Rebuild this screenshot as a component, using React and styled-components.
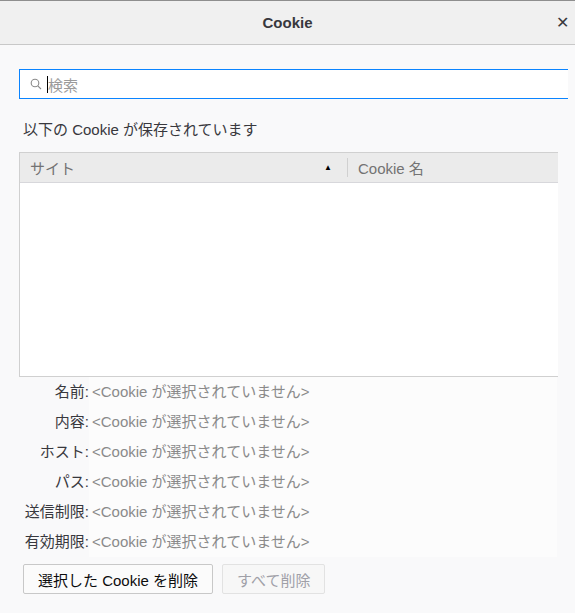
import React from 'react';
import styled, { createGlobalStyle } from 'styled-components';

const Global = createGlobalStyle`
  body { margin: 0; background: #f9f9fa; font-family: "Liberation Sans", "Noto Sans CJK JP", sans-serif; }
`;

const Window = styled.div`
  width: 575px;
  height: 613px;
  overflow: hidden;
  background: #f9f9fa;
  border-top: 1px solid #8e8e8e;
  box-sizing: border-box;
`;

const Header = styled.div`
  height: 43px;
  background: #f0f0f0;
  border-bottom: 1px solid #c8c8c8;
  display: flex;
  align-items: center;
  justify-content: center;
  position: relative;
  font-size: 15px;
  font-weight: bold;
  color: #38383d;
`;

const Close = styled.span`
  position: absolute;
  right: 6px;
  top: 12px;
  font-size: 16px;
  font-weight: normal;
  color: #38383d;
`;

const Body = styled.div`
  padding: 24px 0 0 19px;
  display: flex;
  flex-direction: column;
`;

const Search = styled.div`
  width: 538px;
  height: 28px;
  border: 1px solid #0a84ff;
  border-right: none;
  background: #fff;
  display: flex;
  align-items: center;
  gap: 5px;
  padding-left: 10px;
  box-sizing: content-box;
  font-size: 15px;
  color: #9a9a9a;
`;

const Caret = styled.span`
  width: 1px;
  height: 17px;
  background: #000;
  margin-right: -5px;
`;

const Caption = styled.div`
  margin: 19px 0 13px 4px;
  font-size: 15px;
  color: #38383d;
`;

const Table = styled.div`
  width: 538px;
  height: 223px;
  border: 1px solid #d0d0d0;
  border-right: none;
  background: #fff;
`;

const Head = styled.div`
  height: 29px;
  background: #ebebeb;
  border-bottom: 1px solid #d7d7db;
  display: flex;
  align-items: center;
  font-size: 15px;
  color: #737373;
`;

const Col = styled.div`
  width: ${p => p.$w};
  padding-left: 10px;
  display: flex;
  align-items: center;
  justify-content: space-between;
  box-sizing: border-box;
  border-left: ${p => (p.$sep ? '1px solid #d0d0d0' : 'none')};
  height: 19px;
`;

const Arrow = styled.span`
  font-size: 8px;
  color: #000;
  margin-right: 15px;
`;

const Details = styled.div`
  display: grid;
  grid-template-columns: 70px 1fr;
  width: 538px;
  margin-top: 0;
`;

const Label = styled.div`
  text-align: right;
  height: 30px;
  line-height: 30px;
  font-size: 15px;
  color: #38383d;
`;

const Value = styled.div`
  height: 30px;
  line-height: 30px;
  padding-left: 3px;
  background: #fcfcfc;
  font-size: 15px;
  color: #8a8a8a;
`;

const Buttons = styled.div`
  display: flex;
  gap: 9px;
  margin: 7px 0 0 4px;
`;

const Button = styled.button`
  height: 30px;
  padding: 0 14px;
  font-family: inherit;
  font-size: 15px;
  border: 1px solid ${p => (p.$disabled ? '#e2e2e2' : '#c8c8c8')};
  background: ${p => (p.$disabled ? '#f7f7f7' : '#fbfbfb')};
  color: ${p => (p.$disabled ? '#a0a0a8' : '#0c0c0d')};
  border-radius: 2px;
`;

const SearchIcon = () => (
  <svg width="12" height="12" viewBox="0 0 12 12" fill="none" stroke="#8a8a8a" strokeWidth="1.1">
    <circle cx="5" cy="5" r="3.8" />
    <path d="M7.8 7.8 L11 11" />
  </svg>
);

const rows = ['名前', '内容', 'ホスト', 'パス', '送信制限', '有効期限'];

export default function App() {
  return (
    <Window>
      <Global />
      <Header>
        Cookie
        <Close>✕</Close>
      </Header>
      <Body>
        <Search>
          <SearchIcon />
          <Caret />
          検索
        </Search>
        <Caption>以下の Cookie が保存されています</Caption>
        <Table>
          <Head>
            <Col $w="327px">サイト<Arrow>▲</Arrow></Col>
            <Col $w="211px" $sep>Cookie 名</Col>
          </Head>
        </Table>
        <Details>
          {rows.map(r => (
            <React.Fragment key={r}>
              <Label>{r}:</Label>
              <Value>&lt;Cookie が選択されていません&gt;</Value>
            </React.Fragment>
          ))}
        </Details>
        <Buttons>
          <Button>選択した Cookie を削除</Button>
          <Button $disabled>すべて削除</Button>
        </Buttons>
      </Body>
    </Window>
  );
}
